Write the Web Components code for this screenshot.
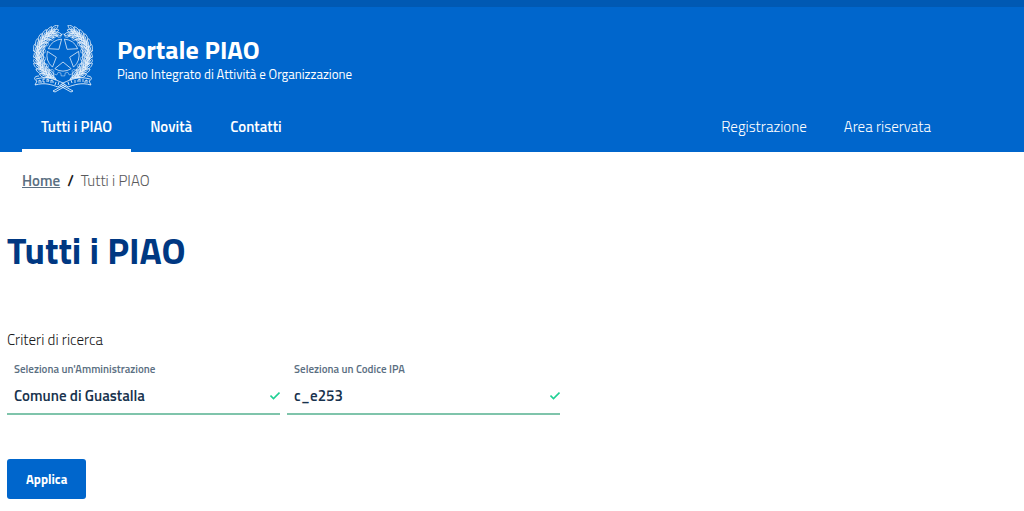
<!DOCTYPE html>
<html lang="it">
<head>
<meta charset="utf-8">
<meta name="viewport" content="width=device-width, initial-scale=1">
<title>Portale PIAO</title>
<style>
body{margin:0;background:#fff;color:#19191a;--blue:#06c;--face:"Titillium Web",Roboto,"Noto Sans",sans-serif;font-family:var(--face)}
</style>
</head>
<body>
<piao-header></piao-header>
<piao-page heading="Tutti i PIAO">
  <piao-breadcrumb slot="path" current="Tutti i PIAO"></piao-breadcrumb>
  <piao-search></piao-search>
</piao-page>
<script>
class Base extends HTMLElement{
  connectedCallback(){
    if(this.shadowRoot)return;
    this.attachShadow({mode:'open'}).innerHTML='<style>*{box-sizing:border-box}'+this.styles()+'</style>'+this.markup();
  }
}

/* State emblem: wreath, cogwheel, star and ribbon */
customElements.define('piao-emblem',class extends Base{
  styles(){return ':host{display:block;width:60px;height:68px;flex:none}svg{display:block;width:100%;height:100%}'}
  markup(){
    const cx=30,cy=30,at=(r,deg)=>{const a=deg*Math.PI/180;return [(cx+r*Math.sin(a)).toFixed(1),(cy-r*Math.cos(a)).toFixed(1)]};
    let segs='',leaves='',gear='';
    for(let i=0;i<5;i++){
      const m=i*72+36;
      segs+=`<path d="M${at(7,m)}L${at(16,m-31)}A16 16 0 0 1 ${at(16,m+31)}Z"/>`;
    }
    for(let i=0;i<16;i++){
      const a=i*22.5;
      gear+=(i?'L':'M')+at(18,a-7)+'L'+at(21,a-5)+'L'+at(21,a+5)+'L'+at(18,a+7);
    }
    /* each leaf follows the branch upward and fans out from it */
    for(let d=16;d<=150;d+=12)for(const s of [1,-1])for(const [r,fan,off] of [[22,-28,0],[25,0,5],[28,24,2]]){
      const [x,y]=at(r,s*(d+off));
      leaves+=`<path transform="translate(${x} ${y}) rotate(${s*(d+off-90+fan)})" d="M0 5C-3 1-2-3 0-5C2-3 3 1 0 5V-2"/>`;
    }
    return `<svg viewBox="0 0 60 68" role="img" aria-label="Emblema della Repubblica Italiana" fill="none" stroke="#fff" stroke-linejoin="round">
    <path d="${gear}Z" stroke-width=".7" opacity=".65"/>
    <g stroke-width=".8" opacity=".9">${leaves}</g>
    <g stroke-width=".8" opacity=".9">${segs}</g>
    <g stroke-width=".8" fill="#06c"><path d="M20 66L36 57M22 67L38 58M40 66L24 57M38 67L22 58M20 66l2 1M40 66l-2 1"/><path d="M6 51C0 51 1 55 4 56L2 60C12 57 19 60 25 62L30 58C21 54 14 51 3 54"/><path d="M54 51C60 51 59 55 56 56L58 60C48 57 41 60 35 62L30 58C39 54 46 51 57 54"/></g>
    <path stroke-width=".8" d="M6 58v-3l2 1v2M10 57v-3h2M10 57h2M14 57v-3l2 1-1 2M18 58v-3l2 1v2M22 60l1-3M25 60l1-3M54 58v-3l-2 1v2M50 57v-3M47 57v-3l-2 1v2M42 58v-3M39 58l-1-3M36 60l-1-3"/></svg>`}
});

customElements.define('piao-header',class extends Base{
  styles(){return `:host{display:block;background:var(--blue);color:#fff}
  .slim{height:7px;background:#0059b3}
  .brand{display:flex;align-items:center;gap:24px;padding:18px 33px 0}
  .brand a{color:inherit;text-decoration:none;padding-top:2px}
  .name{display:block;font-size:26px;line-height:28px;font-weight:700}
  .tag{display:block;font-size:13px;line-height:20px}
  nav{display:flex;justify-content:space-between;padding:10px 75px 0 22px}
  ul{display:flex;margin:0;padding:0;list-style:none}
  li a{display:block;font-size:15px;line-height:24px;padding:12px 19px 10px;border-bottom:3px solid transparent;color:#fff;text-decoration:none;font-weight:600}
  li .here{border-color:#fff}
  .user{gap:1px}
  .user a{padding-left:18px;padding-right:18px;font-weight:300}`}
  markup(){return `<header><div class="slim"></div>
  <div class="brand"><piao-emblem></piao-emblem><a href="#"><span class="name">Portale PIAO</span><span class="tag">Piano Integrato di Attività e Organizzazione</span></a></div>
  <nav aria-label="Principale"><ul><li><a class="here" href="#" aria-current="page">Tutti i PIAO</a></li><li><a href="#">Novità</a></li><li><a href="#">Contatti</a></li></ul>
  <ul class="user"><li><a href="#">Registrazione</a></li><li><a href="#">Area riservata</a></li></ul></nav></header>`}
});

customElements.define('piao-breadcrumb',class extends Base{
  styles(){return `:host{display:block}ol{display:flex;gap:7px;margin:0;padding:17px 15px;list-style:none;font-size:15px;line-height:24px}
  a{color:#5b6f82;font-weight:600}.sep{font-weight:600}.now{font-weight:300;color:#5a5a5c}`}
  markup(){return `<nav aria-label="Percorso"><ol><li><a href="#">Home</a></li><li class="sep" aria-hidden="true">/</li><li class="now" aria-current="page">${this.getAttribute('current')}</li></ol></nav>`}
});

customElements.define('piao-page',class extends Base{
  styles(){return `:host{display:block;padding:0 7px 12px}h1{margin:15px 0 53px;font-size:37px;line-height:50px;font-weight:700;color:#003882}`}
  markup(){return `<slot name="path"></slot><main><h1>${this.getAttribute('heading')}</h1><slot></slot></main>`}
});

customElements.define('piao-field',class extends Base{
  styles(){return `:host{display:block;min-width:0}
  label{display:block;padding-left:7px;font-size:11px;line-height:20px;font-weight:600;color:#5b6f82}
  .box{display:flex;align-items:center;border-bottom:2px solid #7fc4ab;height:36px}
  input{flex:1;min-width:0;border:0;outline:0;background:none;padding:0 7px;font:600 15px/24px var(--face);color:#17324d}
  svg{flex:none;width:10px;height:10px}`}
  markup(){return `<label for="f">${this.getAttribute('label')}</label><div class="box"><input id="f" type="text" value="${this.getAttribute('value')}"><svg viewBox="0 0 10 10" aria-hidden="true"><path d="M0.500 4.500L3.500 7.500L9.500 1.500" fill="none" stroke="#1fd094" stroke-width="1.6"/></svg></div>`}
});

customElements.define('piao-search',class extends Base{
  styles(){return `:host{display:block}fieldset{display:block;border:0;margin:0;padding:0;min-width:0}
  legend{padding:0;font-size:15px;line-height:24px;font-weight:300;color:#19191a}
  .row{display:grid;grid-template-columns:17fr 17fr 28fr;gap:7px;padding-top:7px}
  button{margin-top:44px;border:0;border-radius:3px;background:var(--blue);color:#fff;font:700 13px/20px var(--face);padding:10px 19px}`}
  markup(){return `<form><fieldset><legend>Criteri di ricerca</legend><div class="row"><piao-field label="Seleziona un'Amministrazione" value="Comune di Guastalla"></piao-field><piao-field label="Seleziona un Codice IPA" value="c_e253"></piao-field></div></fieldset><button type="button">Applica</button></form>`}
});
</script>
</body>
</html>
